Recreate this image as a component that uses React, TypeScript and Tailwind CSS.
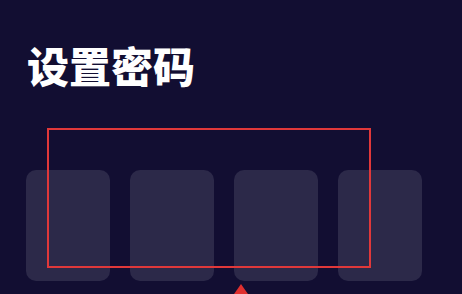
export default function App() {
  return (
    <div className="relative h-[294px] w-[462px] overflow-hidden bg-[#120e32] font-['Noto_Sans_CJK_SC',sans-serif]">
      <h1 className="pl-[27px] pt-[36px] text-[42px] font-black leading-[58px] text-white">设置密码</h1>

      <div className="mt-[76px] flex gap-[20px] pl-[26px]">
        <div className="h-[111px] w-[84px] rounded-[10px] bg-[#2c2949]" />
        <div className="h-[111px] w-[84px] rounded-[10px] bg-[#2c2949]" />
        <div className="h-[111px] w-[84px] rounded-[10px] bg-[#2c2949]" />
        <div className="h-[111px] w-[84px] rounded-[10px] bg-[#2c2949]" />
      </div>

      {/* annotation */}
      <div className="absolute left-[47px] top-[128px] h-[140px] w-[324px] border-2 border-[#e0383a]" />
      <svg className="absolute left-[230px] top-[283px]" width="22" height="14" viewBox="0 0 22 14">
        <path d="M11 1 L20 14 L2 14 Z" fill="#e0302f" />
      </svg>
    </div>
  )
}
